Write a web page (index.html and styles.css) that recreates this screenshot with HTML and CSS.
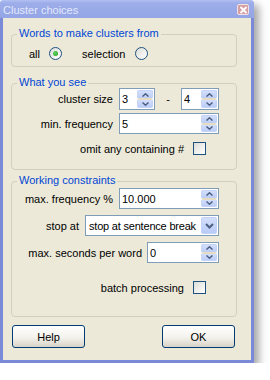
FILE: index.html
```html
<!DOCTYPE html>
<html>
<head>
<meta charset="utf-8">
<link rel="stylesheet" href="styles.css">
</head>
<body>
<div class="window">
  <div class="titlebar">
    <span class="title">Cluster choices</span>
    <span class="close"><svg width="9" height="8" viewBox="0 0 9 8"><path d="M1.5 1 L7.5 7 M7.5 1 L1.5 7" stroke="#fff" stroke-width="1.8" fill="none"/></svg></span>
  </div>
  <div class="body">
    <div class="group g1">
      <div class="legend">Words to make clusters from</div>
      <div class="radio-row">
        <span>all</span>
        <span class="radio checked"></span>
        <span class="sel">selection</span>
        <span class="radio"></span>
      </div>
    </div>

    <div class="group g2">
      <div class="legend">What you see</div>
      <div class="row r-size">
        <span class="lbl">cluster size</span>
        <div class="spin w-small"><span class="val">3</span><div class="spinbtn"><span class="up"><svg width="7" height="4" viewBox="0 0 7 4"><path d="M0.5 3.5 L3.5 0.8 L6.5 3.5" stroke="#4d6185" stroke-width="1.5" fill="none"/></svg></span><span class="dn"><svg width="7" height="4" viewBox="0 0 7 4"><path d="M0.5 0.5 L3.5 3.2 L6.5 0.5" stroke="#4d6185" stroke-width="1.5" fill="none"/></svg></span></div></div>
        <span class="dash">-</span>
        <div class="spin w-small2"><span class="val">4</span><div class="spinbtn"><span class="up"><svg width="7" height="4" viewBox="0 0 7 4"><path d="M0.5 3.5 L3.5 0.8 L6.5 3.5" stroke="#4d6185" stroke-width="1.5" fill="none"/></svg></span><span class="dn"><svg width="7" height="4" viewBox="0 0 7 4"><path d="M0.5 0.5 L3.5 3.2 L6.5 0.5" stroke="#4d6185" stroke-width="1.5" fill="none"/></svg></span></div></div>
      </div>
      <div class="row r-minf">
        <span class="lbl">min. frequency</span>
        <div class="spin w-wide"><span class="val">5</span><div class="spinbtn"><span class="up"><svg width="7" height="4" viewBox="0 0 7 4"><path d="M0.5 3.5 L3.5 0.8 L6.5 3.5" stroke="#4d6185" stroke-width="1.5" fill="none"/></svg></span><span class="dn"><svg width="7" height="4" viewBox="0 0 7 4"><path d="M0.5 0.5 L3.5 3.2 L6.5 0.5" stroke="#4d6185" stroke-width="1.5" fill="none"/></svg></span></div></div>
      </div>
      <div class="row r-check r-omit">
        <span class="lbl">omit any containing #</span>
        <span class="check"></span>
      </div>
    </div>

    <div class="group g3">
      <div class="legend">Working constraints</div>
      <div class="row r-maxf">
        <span class="lbl">max. frequency %</span>
        <div class="spin w-wide"><span class="val">10.000</span><div class="spinbtn"><span class="up"><svg width="7" height="4" viewBox="0 0 7 4"><path d="M0.5 3.5 L3.5 0.8 L6.5 3.5" stroke="#4d6185" stroke-width="1.5" fill="none"/></svg></span><span class="dn"><svg width="7" height="4" viewBox="0 0 7 4"><path d="M0.5 0.5 L3.5 3.2 L6.5 0.5" stroke="#4d6185" stroke-width="1.5" fill="none"/></svg></span></div></div>
      </div>
      <div class="row r-stop">
        <span class="lbl">stop at</span>
        <div class="combo"><span class="val">stop at sentence break</span><span class="dropbtn"><svg width="9" height="6" viewBox="0 0 9 6"><path d="M1 1 L4.5 4.5 L8 1" stroke="#4d6185" stroke-width="2" fill="none"/></svg></span></div>
      </div>
      <div class="row r-secs">
        <span class="lbl">max. seconds per word</span>
        <div class="spin w-mid"><span class="val">0</span><div class="spinbtn"><span class="up"><svg width="7" height="4" viewBox="0 0 7 4"><path d="M0.5 3.5 L3.5 0.8 L6.5 3.5" stroke="#4d6185" stroke-width="1.5" fill="none"/></svg></span><span class="dn"><svg width="7" height="4" viewBox="0 0 7 4"><path d="M0.5 0.5 L3.5 3.2 L6.5 0.5" stroke="#4d6185" stroke-width="1.5" fill="none"/></svg></span></div></div>
      </div>
      <div class="row r-check r-batch">
        <span class="lbl">batch processing</span>
        <span class="check"></span>
      </div>
    </div>

    <div class="buttons">
      <button class="btn">Help</button>
      <button class="btn">OK</button>
    </div>
  </div>
</div>
</body>
</html>
```

FILE: styles.css
```css
* { box-sizing: border-box; }

body {
  margin: 0;
  background: #ffffff;
  font-family: "Liberation Sans", Arial, sans-serif;
  font-size: 11px;
  color: #000;
}

.window {
  width: 254px;
  height: 363px;
  display: flex;
  flex-direction: column;
  box-shadow: 5px 5px 8px rgba(0, 0, 0, 0.35);
}

.titlebar {
  height: 18px;
  flex: none;
  display: flex;
  align-items: center;
  justify-content: space-between;
  padding: 1px 5px 0 3px;
  background: linear-gradient(#b2c0f2 0, #9dade9 3px, #94a5e6 100%);
  border-radius: 3px 3px 0 0;
  color: #e2e8fb;
}

.title {
  font-size: 11px;
  line-height: 14px;
}

.close {
  width: 12px;
  height: 11px;
  display: flex;
  align-items: center;
  justify-content: center;
  background: #d59ea3;
  border: 1px solid #f1e2e6;
  border-radius: 2px;
}

.body {
  flex: 1;
  background: #ece9d8;
  border: 3px solid #7b89d9;
  border-top: 0;
  padding: 16px 0 0 8px;
  display: flex;
  flex-direction: column;
}

.group {
  width: 226px;
  border: 1px solid #d0d0bf;
  border-radius: 4px;
  display: flex;
  flex-direction: column;
}

.legend {
  align-self: flex-start;
  margin: -8px 0 -3px 5px;
  padding: 0 2px;
  height: 13px;
  line-height: 13px;
  background: #ece9d8;
  color: #0046d5;
}

.g1 { padding-bottom: 6px; }
.g2 { margin-top: 16px; padding-bottom: 14px; }
.g3 { margin-top: 11px; padding-bottom: 22px; }

.radio-row {
  display: flex;
  align-items: center;
  height: 13px;
  margin-top: 10px;
  padding-left: 17px;
}

.radio-row .radio:nth-child(2) { margin-left: 9px; }
.radio-row .sel { margin-left: 20px; }
.radio-row .sel + .radio { margin-left: 10px; }

.radio {
  width: 13px;
  height: 13px;
  border-radius: 50%;
  border: 1px solid #1c5180;
  background: linear-gradient(135deg, #dcdcd7, #ffffff);
  display: flex;
  align-items: center;
  justify-content: center;
}

.radio.checked::after {
  content: "";
  width: 5px;
  height: 5px;
  border-radius: 50%;
  background: radial-gradient(circle at 40% 40%, #5fd35f, #21a121);
}

.row {
  display: flex;
  align-items: center;
  justify-content: flex-end;
  gap: 6px;
  padding-right: 17px;
}

.lbl { white-space: nowrap; }

.r-size { margin-top: 2px; height: 22px; }
.r-minf { margin-top: 3px; height: 21px; }
.r-omit { margin-top: 8px; }
.r-maxf { margin-top: 4px; height: 21px; }
.r-stop { margin-top: 6px; height: 21px; }
.r-secs { margin-top: 6px; height: 21px; gap: 5px; }
.r-batch { margin-top: 18px; }

.r-check { height: 13px; gap: 9px; }
.r-check .check { margin-right: 13px; }

.check {
  width: 13px;
  height: 13px;
  border: 1px solid #1c5180;
  background: linear-gradient(135deg, #dcdcd7, #ffffff);
}

.spin, .combo {
  height: 100%;
  display: flex;
  align-items: stretch;
  border: 1px solid #7f9db9;
  background: #fff;
  padding: 1px;
}

.w-small { width: 36px; }
.w-small2 { width: 38px; }
.w-wide { width: 100px; }
.w-mid { width: 72px; }
.combo { width: 134px; }

.val {
  flex: 1;
  display: flex;
  align-items: center;
  padding-left: 1px;
  white-space: nowrap;
  overflow: hidden;
}

.combo .val {
  padding-left: 2px;
  letter-spacing: -0.2px;
}

.dash {
  width: 14px;
  text-align: center;
}

.spinbtn {
  width: 16px;
  display: flex;
  flex-direction: column;
}

.spinbtn span {
  flex: 1;
  display: flex;
  align-items: center;
  justify-content: center;
  background: linear-gradient(#d3defb, #bccdf6);
  border: 1px solid #c4d3f7;
  border-radius: 2px;
}

.spinbtn .up { border-bottom-color: #e5dcc2; }
.spinbtn .dn { border-top-color: #e5dcc2; }

.dropbtn {
  width: 16px;
  display: flex;
  align-items: center;
  justify-content: center;
  background: linear-gradient(#d3defb, #b9cbf6);
  border: 1px solid #c1d1f7;
  border-radius: 2px;
}

.buttons {
  margin-top: 8px;
  width: 226px;
  display: flex;
  justify-content: space-between;
  padding: 0 2px 0 1px;
}

.btn {
  width: 73px;
  height: 23px;
  padding: 0;
  border: 1px solid #003c74;
  border-radius: 3px;
  background: linear-gradient(#ffffff, #f3f2ec 55%, #d8d3c8);
  font-family: "Liberation Sans", Arial, sans-serif;
  font-size: 11px;
  color: #000;
}
```
